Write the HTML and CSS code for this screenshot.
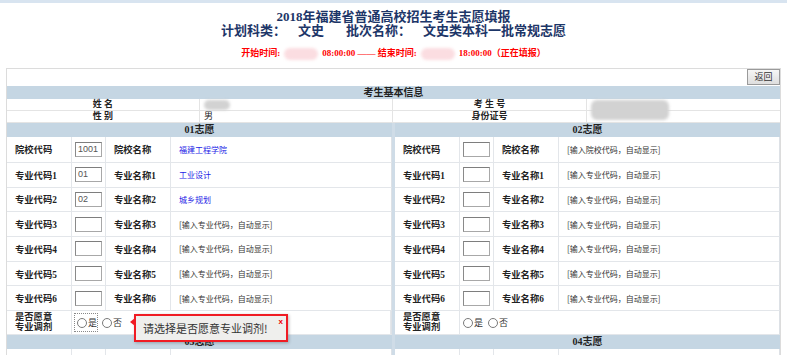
FILE: index.html
```html
<!DOCTYPE html>
<html lang="zh-CN">
<head>
    <meta charset="UTF-8">
    <title>志愿填报</title>
    <link rel="stylesheet" href="styles.css">
</head>
<body>
    <div class="topbar"></div>

    <div class="heading">
        <h1>2018年福建省普通高校招生考生志愿填报</h1>
        <h2><span class="k">计划科类：</span><span class="v">文史</span><span class="k">批次名称：</span><span class="v">文史类本科一批常规志愿</span></h2>
        <p class="period">开始时间:<span class="mask pink"></span>08:00:00 —— 结束时间:<span class="mask pink"></span>18:00:00（正在填报）</p>
    </div>

    <div class="board">
        <div class="toolbar"><button class="back-btn">返回</button></div>

        <div class="band">考生基本信息</div>
        <div class="info-row">
            <div class="info-label">姓 名</div>
            <div class="info-value"><span class="mask grey short"></span></div>
            <div class="info-label">考 生 号</div>
            <div class="info-value"><span class="mask grey long"></span></div>
        </div>
        <div class="info-row">
            <div class="info-label">性 别</div>
            <div class="info-value">男</div>
            <div class="info-label">身份证号</div>
            <div class="info-value"></div>
        </div>

        <div class="panels">
            <!-- 01 -->
            <div class="panel">
                <div class="panel-head">01志愿</div>
                <div class="row first">
                    <div class="c lbl">院校代码</div>
                    <div class="c box"><span class="code">1001</span></div>
                    <div class="c lbl">院校名称</div>
                    <div class="c val link">福建工程学院</div>
                </div>
                <div class="row">
                    <div class="c lbl">专业代码1</div>
                    <div class="c box"><span class="code">01</span></div>
                    <div class="c lbl">专业名称1</div>
                    <div class="c val link">工业设计</div>
                </div>
                <div class="row">
                    <div class="c lbl">专业代码2</div>
                    <div class="c box"><span class="code">02</span></div>
                    <div class="c lbl">专业名称2</div>
                    <div class="c val link">城乡规划</div>
                </div>
                <div class="row">
                    <div class="c lbl">专业代码3</div>
                    <div class="c box"><span class="code"></span></div>
                    <div class="c lbl">专业名称3</div>
                    <div class="c val">[输入专业代码，自动显示]</div>
                </div>
                <div class="row">
                    <div class="c lbl">专业代码4</div>
                    <div class="c box"><span class="code"></span></div>
                    <div class="c lbl">专业名称4</div>
                    <div class="c val">[输入专业代码，自动显示]</div>
                </div>
                <div class="row">
                    <div class="c lbl">专业代码5</div>
                    <div class="c box"><span class="code"></span></div>
                    <div class="c lbl">专业名称5</div>
                    <div class="c val">[输入专业代码，自动显示]</div>
                </div>
                <div class="row">
                    <div class="c lbl">专业代码6</div>
                    <div class="c box"><span class="code"></span></div>
                    <div class="c lbl">专业名称6</div>
                    <div class="c val">[输入专业代码，自动显示]</div>
                </div>
                <div class="row adjust">
                    <div class="c lbl two">是否愿意<br>专业调剂</div>
                    <div class="c radios">
                        <span class="opt focus"><i class="radio"></i>是</span>
                        <span class="opt"><i class="radio"></i>否</span>
                    </div>
                    <div class="tip">
                        请选择是否愿意专业调剂!
                        <span class="tip-close">x</span>
                    </div>
                </div>
                <div class="panel-head">03志愿</div>
                <div class="row">
                    <div class="c"></div>
                    <div class="c"></div>
                    <div class="c"></div>
                    <div class="c"></div>
                </div>
            </div>

            <!-- 02 -->
            <div class="panel">
                <div class="panel-head">02志愿</div>
                <div class="row first">
                    <div class="c lbl">院校代码</div>
                    <div class="c box"><span class="code"></span></div>
                    <div class="c lbl">院校名称</div>
                    <div class="c val">[输入院校代码，自动显示]</div>
                </div>
                <div class="row">
                    <div class="c lbl">专业代码1</div>
                    <div class="c box"><span class="code"></span></div>
                    <div class="c lbl">专业名称1</div>
                    <div class="c val">[输入专业代码，自动显示]</div>
                </div>
                <div class="row">
                    <div class="c lbl">专业代码2</div>
                    <div class="c box"><span class="code"></span></div>
                    <div class="c lbl">专业名称2</div>
                    <div class="c val">[输入专业代码，自动显示]</div>
                </div>
                <div class="row">
                    <div class="c lbl">专业代码3</div>
                    <div class="c box"><span class="code"></span></div>
                    <div class="c lbl">专业名称3</div>
                    <div class="c val">[输入专业代码，自动显示]</div>
                </div>
                <div class="row">
                    <div class="c lbl">专业代码4</div>
                    <div class="c box"><span class="code"></span></div>
                    <div class="c lbl">专业名称4</div>
                    <div class="c val">[输入专业代码，自动显示]</div>
                </div>
                <div class="row">
                    <div class="c lbl">专业代码5</div>
                    <div class="c box"><span class="code"></span></div>
                    <div class="c lbl">专业名称5</div>
                    <div class="c val">[输入专业代码，自动显示]</div>
                </div>
                <div class="row">
                    <div class="c lbl">专业代码6</div>
                    <div class="c box"><span class="code"></span></div>
                    <div class="c lbl">专业名称6</div>
                    <div class="c val">[输入专业代码，自动显示]</div>
                </div>
                <div class="row adjust">
                    <div class="c lbl two">是否愿意<br>专业调剂</div>
                    <div class="c radios">
                        <span class="opt"><i class="radio"></i>是</span>
                        <span class="opt"><i class="radio"></i>否</span>
                    </div>
                </div>
                <div class="panel-head">04志愿</div>
                <div class="row">
                    <div class="c"></div>
                    <div class="c"></div>
                    <div class="c"></div>
                    <div class="c"></div>
                </div>
            </div>
        </div>
    </div>
</body>
</html>
```

FILE: styles.css
```css
body {
    margin: 0;
    background: #fff;
    font-family: "Liberation Serif", "Noto Sans CJK SC", serif;
    color: #222;
    overflow: hidden;
}
.topbar {
    height: 3px;
    background: #d8e4f0;
}
.heading {
    text-align: center;
    padding-top: 7px;
}
.heading h1 {
    margin: 0;
    font-size: 13px;
    line-height: 14px;
    color: #1d3668;
    font-weight: bold;
}
.heading h2 {
    margin: 0;
    font-size: 13px;
    line-height: 14px;
    color: #1d3668;
    font-weight: bold;
}
.heading h2 .k {
    margin-right: 12px;
}
.heading h2 .v {
    margin-right: 22px;
}
.heading h2 .v:last-child {
    margin-right: 0;
}
.period {
    margin: 9px 0 0;
    font-size: 9px;
    line-height: 12px;
    color: #f00;
    font-weight: bold;
}
.mask {
    display: inline-block;
    vertical-align: middle;
    border-radius: 6px;
    filter: blur(1.5px);
}
.mask.pink {
    width: 34px;
    height: 12px;
    margin: 0 4px;
    background: #fbdde1;
}
.mask.grey {
    background: #d2d2d2;
}
.mask.short {
    width: 26px;
    height: 10px;
    margin-top: 1px;
}
.mask.long {
    width: 78px;
    height: 20px;
    position: absolute;
    margin-top: 1px;
}
.board {
    margin: 8px 6px 0;
    border: 1px solid #dcdcdc;
}
.toolbar {
    height: 17px;
    display: flex;
    justify-content: flex-end;
    align-items: flex-start;
}
.back-btn {
    height: 16px;
    width: 33px;
    padding: 0;
    font-family: "Noto Sans CJK SC", sans-serif;
    font-size: 9px;
    line-height: 14px;
    color: #333;
    border: 1px solid #9a9a9a;
    background: linear-gradient(#f6f6f6, #dedede);
}
.band {
    height: 13px;
    line-height: 13px;
    background: #c5d6e3;
    text-align: center;
    font-size: 10px;
    font-weight: bold;
}
.info-row {
    display: grid;
    grid-template-columns: 193px 193px 194px 1fr;
    height: 11px;
    border-bottom: 1px solid #e4e4e4;
    font-size: 9px;
    line-height: 11px;
}
.info-label {
    text-align: center;
    font-weight: bold;
    border-right: 1px solid #e4e4e4;
}
.info-value {
    padding-left: 4px;
    border-right: 1px solid #e4e4e4;
}
.info-value:last-child {
    border-right: none;
}
.panels {
    display: grid;
    grid-template-columns: 1fr 1fr;
    column-gap: 3px;
    background: #cfdce7;
}
.panel {
    background: #fff;
}
.panel-head {
    height: 14px;
    line-height: 14px;
    background: #c5d6e3;
    text-align: center;
    font-size: 10px;
    font-weight: bold;
}
.row {
    display: grid;
    grid-template-columns: 65px 34px 65px 1fr;
    height: 23.7px;
    border-bottom: 1px solid #e3e6ea;
    border-right: 1px solid #dde1e6;
}
.row.first {
    height: 25px;
}
.row.adjust {
    height: 23px;
    position: relative;
}
.c {
    display: flex;
    align-items: center;
    border-right: 1px solid #e3e6ea;
}
.c:last-child {
    border-right: none;
}
.lbl {
    padding-left: 8px;
    font-size: 9.3px;
    font-weight: bold;
    color: #222;
}
.lbl.two {
    display: block;
    line-height: 10px;
    padding-top: 1px;
}
.box {
    padding-left: 3px;
}
.code {
    display: block;
    box-sizing: border-box;
    width: 27px;
    height: 15px;
    border: 1px solid #a8a8a8;
    border-top-color: #7e7e7e;
    border-left-color: #8a8a8a;
    padding-left: 2px;
    font-family: "Liberation Sans", sans-serif;
    font-size: 9px;
    line-height: 13px;
    color: #555;
}
.val {
    padding-left: 8px;
    font-family: "Noto Sans CJK SC", sans-serif;
    font-size: 8px;
    color: #333;
}
.val.link {
    color: #1c1ce6;
}
.radios {
    grid-column: 2 / span 3;
    padding-left: 3px;
    font-family: "Noto Sans CJK SC", sans-serif;
    font-size: 9px;
    color: #333;
    gap: 5px;
}
.opt {
    display: flex;
    align-items: center;
}
.opt.focus {
    outline: 1px dotted #888;
    padding: 2px 0 2px 2px;
}
.radio {
    display: inline-block;
    width: 8px;
    height: 8px;
    border: 1px solid #7a7a7a;
    border-radius: 50%;
    margin-right: 1px;
    background: #fff;
}
.tip {
    position: absolute;
    left: 127px;
    top: 3px;
    width: 143px;
    height: 24px;
    border: 2px solid #f01c24;
    background: #efefed;
    font-family: "Noto Sans CJK SC", sans-serif;
    font-size: 11px;
    line-height: 24px;
    color: #333;
    padding-left: 7px;
    box-sizing: content-box;
    box-shadow: 1px 1px 3px rgba(0, 0, 0, 0.25);
    z-index: 2;
}
.tip::before {
    content: "";
    position: absolute;
    left: -6px;
    top: 2px;
    border-top: 4px solid transparent;
    border-bottom: 4px solid transparent;
    border-right: 5px solid #f01c24;
}
.tip-close {
    position: absolute;
    right: 3px;
    top: -6px;
    font-family: "Liberation Sans", sans-serif;
    font-size: 8px;
    font-weight: bold;
    color: #e00;
}
```
